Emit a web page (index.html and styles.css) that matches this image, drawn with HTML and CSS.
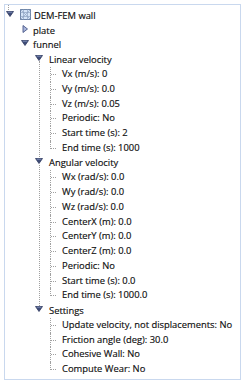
FILE: index.html
```html
<!DOCTYPE html>
<html>
<head>
<meta charset="utf-8">
<link rel="stylesheet" href="styles.css">
</head>
<body>
<div class="frame">
  <ul class="tree">
    <li class="root">
      <div class="row lvl0">
        <span class="exp"><svg width="8" height="6" viewBox="0 0 8 6"><path d="M0.5 0.5 H7.5 L4 5.5 Z" fill="#3f4d78" stroke="#2e3a60" stroke-width="0.8"/><path d="M1.8 1.2 H6.2" stroke="#8c9bc6" stroke-width="0.8"/></svg></span>
        <span class="icon"><svg width="11" height="11" viewBox="0 0 11 11"><rect x="0.5" y="0.5" width="10" height="10" fill="#d4e4f7" stroke="#6f86a8"/><path d="M3.5 0.5 V10.5 M7.5 0.5 V10.5 M0.5 3.5 H10.5 M0.5 7.5 H10.5 M0.5 0.5 L10.5 10.5 M10.5 0.5 L0.5 10.5" stroke="#8ea3c2" stroke-width="0.7"/></svg></span>
        <span class="label">DEM-FEM wall</span>
      </div>
      <ul>
        <li>
          <div class="row lvl1">
            <span class="exp"><svg width="8" height="8" viewBox="0 0 8 8"><path d="M2 0.5 V7.5 L6.5 4 Z" fill="#a9b6dc" stroke="#4a5888" stroke-width="0.9"/></svg></span>
            <span class="label">plate</span>
          </div>
        </li>
        <li>
          <div class="row lvl1">
            <span class="exp"><svg width="8" height="6" viewBox="0 0 8 6"><path d="M0.5 0.5 H7.5 L4 5.5 Z" fill="#3f4d78" stroke="#2e3a60" stroke-width="0.8"/><path d="M1.8 1.2 H6.2" stroke="#8c9bc6" stroke-width="0.8"/></svg></span>
            <span class="label">funnel</span>
          </div>
          <ul class="groups">
            <li class="group">
              <div class="row lvl2">
                <span class="exp"><svg width="8" height="6" viewBox="0 0 8 6"><path d="M0.5 0.5 H7.5 L4 5.5 Z" fill="#3f4d78" stroke="#2e3a60" stroke-width="0.8"/><path d="M1.8 1.2 H6.2" stroke="#8c9bc6" stroke-width="0.8"/></svg></span>
                <span class="label">Linear velocity</span>
              </div>
              <ul class="leaves">
                <li class="leaf">Vx (m/s): 0</li>
                <li class="leaf">Vy (m/s): 0.0</li>
                <li class="leaf">Vz (m/s): 0.05</li>
                <li class="leaf">Periodic: No</li>
                <li class="leaf">Start time (s): 2</li>
                <li class="leaf">End time (s): 1000</li>
              </ul>
            </li>
            <li class="group">
              <div class="row lvl2">
                <span class="exp"><svg width="8" height="6" viewBox="0 0 8 6"><path d="M0.5 0.5 H7.5 L4 5.5 Z" fill="#3f4d78" stroke="#2e3a60" stroke-width="0.8"/><path d="M1.8 1.2 H6.2" stroke="#8c9bc6" stroke-width="0.8"/></svg></span>
                <span class="label">Angular velocity</span>
              </div>
              <ul class="leaves">
                <li class="leaf">Wx (rad/s): 0.0</li>
                <li class="leaf">Wy (rad/s): 0.0</li>
                <li class="leaf">Wz (rad/s): 0.0</li>
                <li class="leaf">CenterX (m): 0.0</li>
                <li class="leaf">CenterY (m): 0.0</li>
                <li class="leaf">CenterZ (m): 0.0</li>
                <li class="leaf">Periodic: No</li>
                <li class="leaf">Start time (s): 0.0</li>
                <li class="leaf">End time (s): 1000.0</li>
              </ul>
            </li>
            <li class="group">
              <div class="row lvl2">
                <span class="exp"><svg width="8" height="6" viewBox="0 0 8 6"><path d="M0.5 0.5 H7.5 L4 5.5 Z" fill="#3f4d78" stroke="#2e3a60" stroke-width="0.8"/><path d="M1.8 1.2 H6.2" stroke="#8c9bc6" stroke-width="0.8"/></svg></span>
                <span class="label">Settings</span>
              </div>
              <ul class="leaves">
                <li class="leaf">Update velocity, not displacements: No</li>
                <li class="leaf">Friction angle (deg): 30.0</li>
                <li class="leaf">Cohesive Wall: No</li>
                <li class="leaf">Compute Wear: No</li>
              </ul>
            </li>
          </ul>
        </li>
      </ul>
    </li>
  </ul>
</div>
</body>
</html>
```

FILE: styles.css
```css
html, body {
  margin: 0;
  padding: 0;
  background: #ffffff;
}

.frame {
  margin: 4px 0 0 4px;
  width: 235px;
  height: 371px;
  border: 1px solid #c9d8ee;
  padding-top: 3px;
  box-sizing: content-box;
  font-family: "Open Sans", "Noto Sans", sans-serif;
  font-size: 9.4px;
  color: #0e0e0e;
  -webkit-text-stroke: 0.15px #0e0e0e;
  overflow: hidden;
}

ul {
  list-style: none;
  margin: 0;
  padding: 0;
}

li {
  position: relative;
}

.row {
  height: 14.75px;
  display: flex;
  align-items: center;
  white-space: nowrap;
  position: relative;
}

.exp {
  width: 8px;
  height: 8px;
  display: flex;
  align-items: center;
  justify-content: center;
  flex: none;
  position: relative;
  z-index: 1;
  margin-top: -3px;
}

.exp svg {
  display: block;
}

.lvl0 .exp {
  margin-left: 1px;
}

.lvl0::before {
  content: "";
  position: absolute;
  left: 3px;
  top: -3px;
  height: 5px;
  border-left: 1px dotted #a0a0a0;
}

.icon {
  margin-left: 6px;
  width: 11px;
  height: 11px;
  flex: none;
  margin-top: -1px;
}

.icon svg {
  display: block;
}

.lvl0 .label {
  margin-left: 3px;
}

.lvl1 {
  padding-left: 16px;
}

.lvl1 .label {
  margin-left: 4px;
}

.lvl2 {
  padding-left: 30px;
}

.lvl2 .label {
  margin-left: 6px;
}

.group:not(:last-child)::before {
  content: "";
  position: absolute;
  left: 34px;
  top: 9px;
  bottom: -5px;
  border-left: 1px dotted #a0a0a0;
}

.leaf {
  height: 14.75px;
  line-height: 14.75px;
  padding-left: 57px;
  white-space: nowrap;
}

.leaf::before {
  content: "";
  position: absolute;
  left: 45px;
  top: 0;
  bottom: 0;
  border-left: 1px dotted #a0a0a0;
}

.leaf:last-child::before {
  bottom: auto;
  height: 8px;
}

.leaf::after {
  content: "";
  position: absolute;
  left: 46px;
  top: 7px;
  width: 5px;
  border-top: 1px dotted #a0a0a0;
}
```
